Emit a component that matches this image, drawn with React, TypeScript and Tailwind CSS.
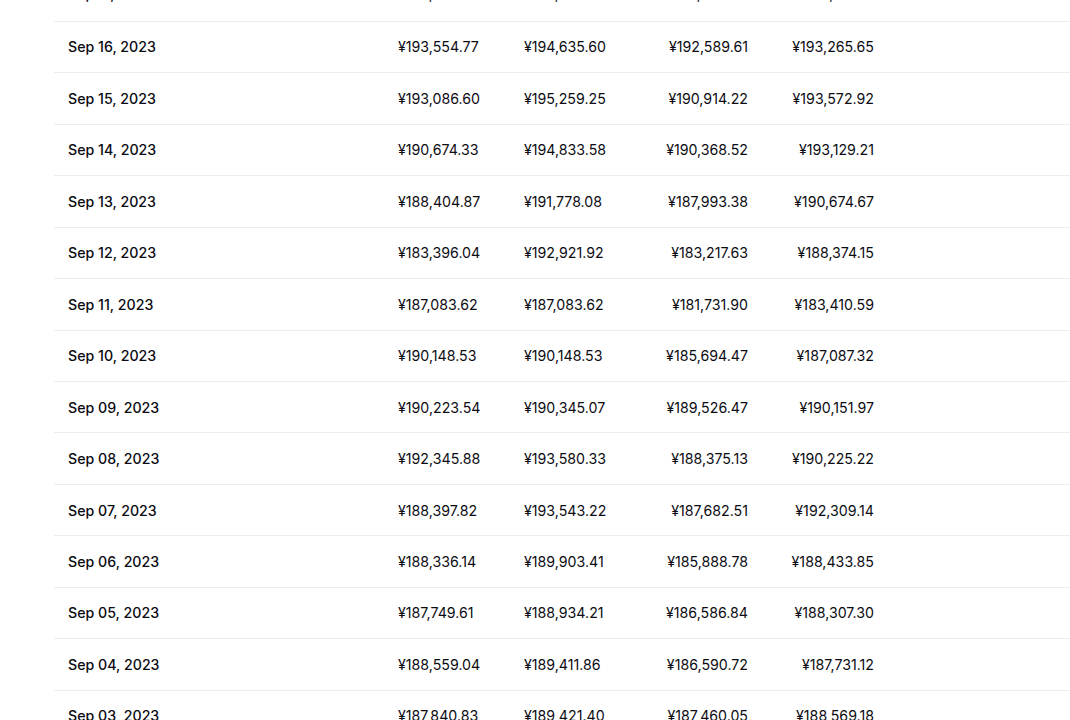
const rows = [
  ["Sep 17, 2023", "¥193,265.51", "¥193,612.88", "¥191,820.09", "¥192,118.45"],
  ["Sep 16, 2023", "¥193,554.77", "¥194,635.60", "¥192,589.61", "¥193,265.65"],
  ["Sep 15, 2023", "¥193,086.60", "¥195,259.25", "¥190,914.22", "¥193,572.92"],
  ["Sep 14, 2023", "¥190,674.33", "¥194,833.58", "¥190,368.52", "¥193,129.21"],
  ["Sep 13, 2023", "¥188,404.87", "¥191,778.08", "¥187,993.38", "¥190,674.67"],
  ["Sep 12, 2023", "¥183,396.04", "¥192,921.92", "¥183,217.63", "¥188,374.15"],
  ["Sep 11, 2023", "¥187,083.62", "¥187,083.62", "¥181,731.90", "¥183,410.59"],
  ["Sep 10, 2023", "¥190,148.53", "¥190,148.53", "¥185,694.47", "¥187,087.32"],
  ["Sep 09, 2023", "¥190,223.54", "¥190,345.07", "¥189,526.47", "¥190,151.97"],
  ["Sep 08, 2023", "¥192,345.88", "¥193,580.33", "¥188,375.13", "¥190,225.22"],
  ["Sep 07, 2023", "¥188,397.82", "¥193,543.22", "¥187,682.51", "¥192,309.14"],
  ["Sep 06, 2023", "¥188,336.14", "¥189,903.41", "¥185,888.78", "¥188,433.85"],
  ["Sep 05, 2023", "¥187,749.61", "¥188,934.21", "¥186,586.84", "¥188,307.30"],
  ["Sep 04, 2023", "¥188,559.04", "¥189,411.86", "¥186,590.72", "¥187,731.12"],
  ["Sep 03, 2023", "¥187,840.83", "¥189,421.40", "¥187,460.05", "¥188,569.18"],
]

export default function App() {
  return (
    <div
      className="h-[720px] w-[1070px] overflow-hidden bg-white text-[#0b0b12]"
      style={{ fontFamily: "Inter, 'Noto Sans', sans-serif" }}
    >
      {/* table is scrolled, first row is cut off */}
      <div className="-mt-[29.6px] ml-[54px] w-[1100px]">
        {rows.map((r, i) => (
          <div
            key={i}
            className={`grid h-[51.46px] grid-cols-[344px_126px_100px_124px_126px_1fr] items-center border-b border-[#ececec] text-[14.2px] ${i === 0 ? "pb-[4px]" : ""}`}
          >
            <div className="pl-[14px] font-medium">{r[0]}</div>
            <div>{r[1]}</div>
            <div>{r[2]}</div>
            <div className="text-right">{r[3]}</div>
            <div className="text-right">{r[4]}</div>
            <div />
          </div>
        ))}
      </div>
    </div>
  )
}
